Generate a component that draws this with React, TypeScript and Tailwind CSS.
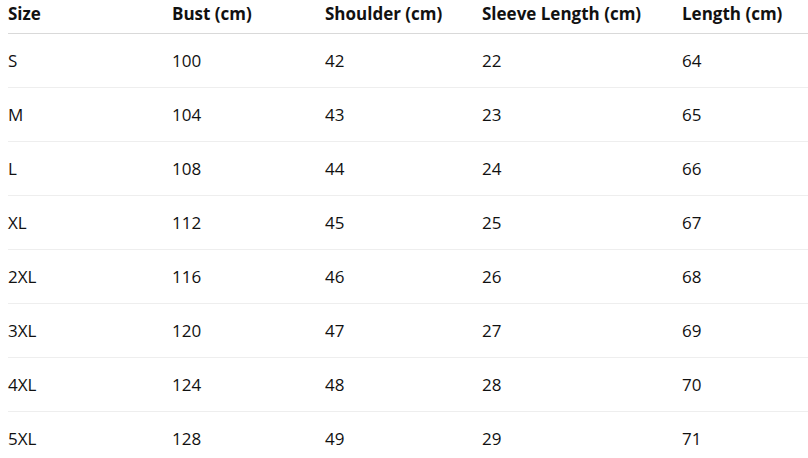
import React from "react";

const rows = [
  ["S", "100", "42", "22", "64"],
  ["M", "104", "43", "23", "65"],
  ["L", "108", "44", "24", "66"],
  ["XL", "112", "45", "25", "67"],
  ["2XL", "116", "46", "26", "68"],
  ["3XL", "120", "47", "27", "69"],
  ["4XL", "124", "48", "28", "70"],
  ["5XL", "128", "49", "29", "71"],
];

const heads = ["Size", "Bust (cm)", "Shoulder (cm)", "Sleeve Length (cm)", "Length (cm)"];
const widths = ["w-[164px]", "w-[153px]", "w-[157px]", "w-[200px]", "w-[126px]"];

export default function App() {
  return (
    <div className="w-[808px] h-[458px] overflow-hidden bg-white pl-2" style={{ fontFamily: '"Open Sans", "Noto Sans", sans-serif' }}>
      <table className="w-[800px] border-collapse table-fixed text-[17px] leading-[24px] text-[#111]">
        <thead>
          <tr className="border-b border-[#d9d9d9] h-[33px]">
            {heads.map((h, i) => (
              <th key={h} className={`${widths[i]} text-left font-bold p-0 pb-[4px] align-middle`}>{h}</th>
            ))}
          </tr>
        </thead>
        <tbody>
          {rows.map((r) => (
            <tr key={r[0]} className="border-b border-[#eeeeee] h-[54px]">
              {r.map((c, i) => (
                <td key={i} className="p-0 pt-[2px] align-middle">{c}</td>
              ))}
            </tr>
          ))}
        </tbody>
      </table>
    </div>
  );
}
